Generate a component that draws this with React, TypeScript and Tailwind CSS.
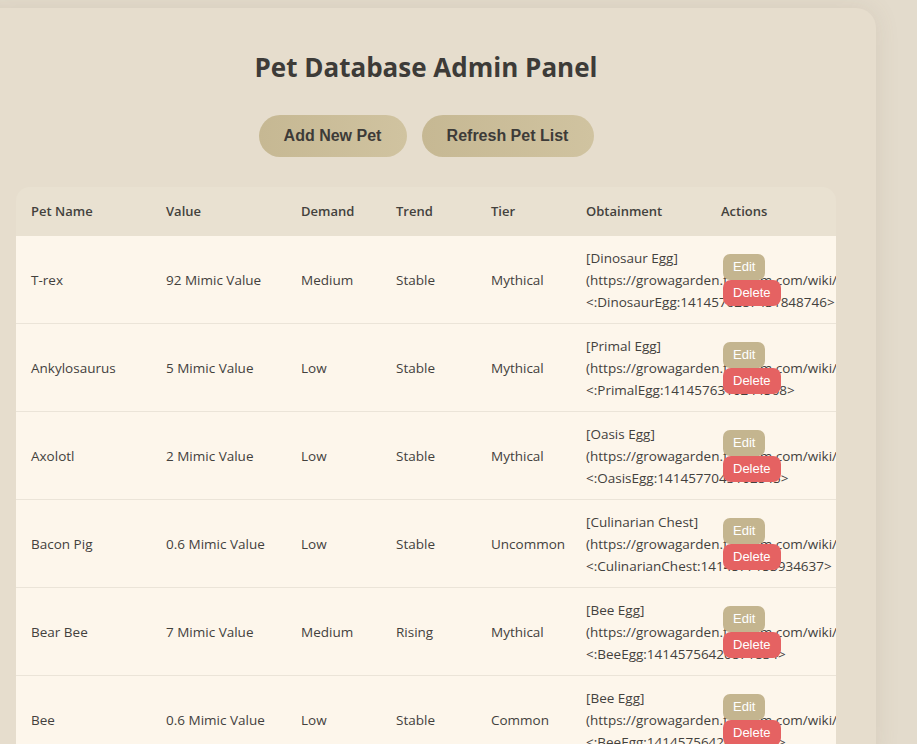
import React from 'react';

interface Pet {
  name: string;
  value: string;
  demand: string;
  trend: string;
  tier: string;
  egg: string;
  slug: string;
  emoji: string;
}

const pets: Pet[] = [
  { name: 'T-rex', value: '92 Mimic Value', demand: 'Medium', trend: 'Stable', tier: 'Mythical', egg: 'Dinosaur Egg', slug: 'Dinosaur_Egg', emoji: '<:DinosaurEgg:1414576287431848746>' },
  { name: 'Ankylosaurus', value: '5 Mimic Value', demand: 'Low', trend: 'Stable', tier: 'Mythical', egg: 'Primal Egg', slug: 'Primal_Egg', emoji: '<:PrimalEgg:1414576310244568>' },
  { name: 'Axolotl', value: '2 Mimic Value', demand: 'Low', trend: 'Stable', tier: 'Mythical', egg: 'Oasis Egg', slug: 'Oasis_Egg', emoji: '<:OasisEgg:1414577043102845>' },
  { name: 'Bacon Pig', value: '0.6 Mimic Value', demand: 'Low', trend: 'Stable', tier: 'Uncommon', egg: 'Culinarian Chest', slug: 'Culinarian_Chest', emoji: '<:CulinarianChest:1414577153934637>' },
  { name: 'Bear Bee', value: '7 Mimic Value', demand: 'Medium', trend: 'Rising', tier: 'Mythical', egg: 'Bee Egg', slug: 'Bee_Egg', emoji: '<:BeeEgg:14145756420871834>' },
  { name: 'Bee', value: '0.6 Mimic Value', demand: 'Low', trend: 'Stable', tier: 'Common', egg: 'Bee Egg', slug: 'Bee_Egg', emoji: '<:BeeEgg:14145756420871834>' },
];

const headers = ['Pet Name', 'Value', 'Demand', 'Trend', 'Tier', 'Obtainment', 'Actions'];
const widths = ['w-[135px]', 'w-[135px]', 'w-[95px]', 'w-[95px]', 'w-[95px]', 'w-[135px]', 'w-[130px]'];

export default function App() {
  return (
    <div className="min-h-[744px] bg-[#e3dbcc] pt-[8px] overflow-hidden font-['Open_Sans',sans-serif]">
      <div className="ml-[-24px] w-[900px] rounded-[20px] bg-[#e6ddcd] px-[40px] pt-[40px] shadow-[0_0_24px_rgba(120,100,70,0.12)]">
        <h1 className="text-center text-[26px] leading-[38px] font-bold text-[#3d3b38]">
          Pet Database Admin Panel
        </h1>

        <div className="mt-[29px] flex justify-center gap-[15px] font-['Liberation_Sans',Arial,sans-serif]">
          <button className="h-[42px] w-[148px] rounded-full bg-gradient-to-r from-[#c6b893] to-[#d0c3a0] text-[16px] font-bold text-[#3d3b38]">
            Add New Pet
          </button>
          <button className="h-[42px] w-[172px] rounded-full bg-gradient-to-r from-[#c6b893] to-[#d0c3a0] text-[16px] font-bold text-[#3d3b38]">
            Refresh Pet List
          </button>
        </div>

        <div className="mt-[30px] w-[820px] overflow-hidden rounded-t-[14px]">
          <table className="w-[820px] table-fixed border-collapse text-left text-[13.5px] text-[#43413d]">
            <thead className="bg-[#e9e1d1]">
              <tr>
                {headers.map((h, i) => (
                  <th key={h} className={`${widths[i]} px-[15px] py-[14px] leading-[21px] text-[13px] font-semibold`}>
                    {h}
                  </th>
                ))}
              </tr>
            </thead>
            <tbody className="bg-[#fdf6eb]">
              {pets.map((p) => (
                <tr key={p.name} className="border-b border-[#ebe4d8]">
                  <td className="px-[15px] pt-[11px] pb-[10px] leading-[22px]">{p.name}</td>
                  <td className="px-[15px] pt-[11px] pb-[10px] leading-[22px]">{p.value}</td>
                  <td className="px-[15px] pt-[11px] pb-[10px] leading-[22px]">{p.demand}</td>
                  <td className="px-[15px] pt-[11px] pb-[10px] leading-[22px]">{p.trend}</td>
                  <td className="px-[15px] pt-[11px] pb-[10px] leading-[22px]">{p.tier}</td>
                  <td className="px-[15px] pt-[11px] pb-[10px] leading-[22px] whitespace-nowrap">
                    <div>[{p.egg}]</div>
                    <div>(https://growagarden.fandom.com/wiki/{p.slug})</div>
                    <div>{p.emoji}</div>
                  </td>
                  <td className="relative px-[15px] pt-[11px] pb-[10px] align-middle">
                    {/* buttons sit on top of the overflowing obtainment text */}
                    <div className="relative z-10 flex flex-col items-start pl-[2px] font-['Liberation_Sans',Arial,sans-serif] text-[13px] text-white">
                      <button className="h-[26px] rounded-[7px] bg-[#c4b58f] px-[10px]">Edit</button>
                      <button className="h-[26px] rounded-[8px] bg-[#e56262] px-[10px]">Delete</button>
                    </div>
                  </td>
                </tr>
              ))}
            </tbody>
          </table>
        </div>
      </div>
    </div>
  );
}
